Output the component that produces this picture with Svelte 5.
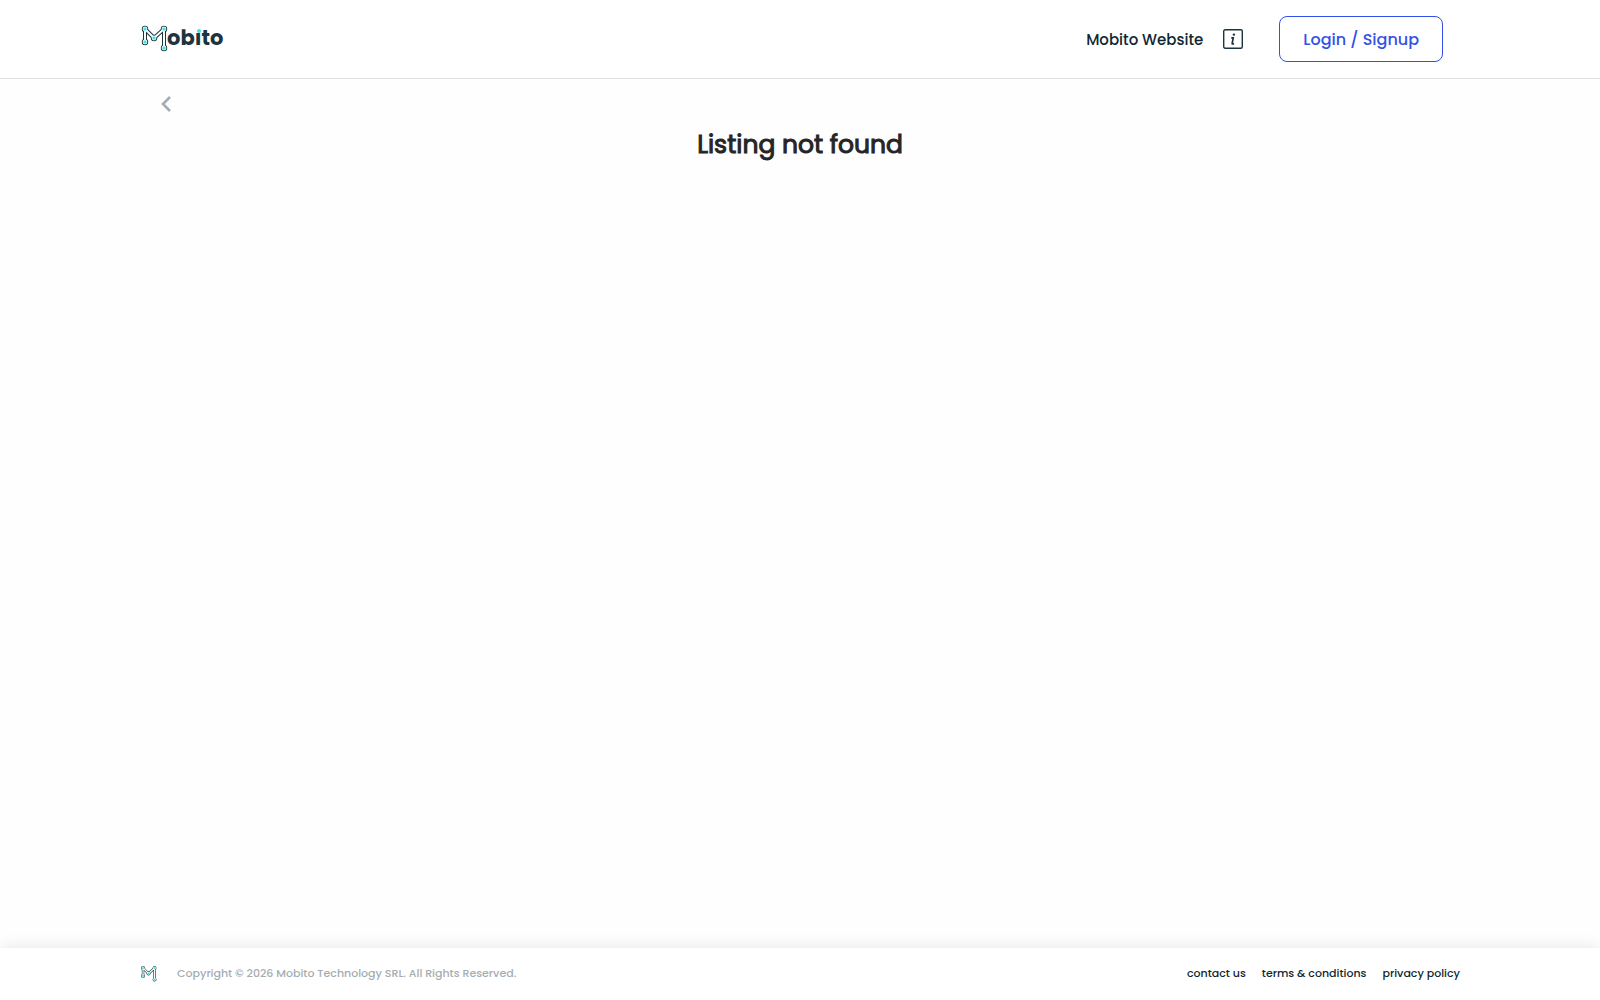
<script lang="ts">
  const nodes = [
    [5, 6],
    [5, 19],
    [14, 15],
    [24, 6],
    [24, 25],
  ];

  const footerLinks = ['contact us', 'terms & conditions', 'privacy policy'];
</script>

{#snippet mark()}
  <g fill="none" stroke-linejoin="round">
    <path d="M5 19V6L14 15L24 6V25" stroke="#1d333d" stroke-width="4" />
    {#each nodes as [cx, cy]}
      <circle {cx} {cy} r="3.2" fill="#1d333d" />
    {/each}
    <path d="M5 19V6L14 15L24 6V25" stroke="#fff" stroke-width="2" />
    {#each nodes as [cx, cy]}
      <circle {cx} {cy} r="2.4" fill="#d4f8f8" />
      <circle {cx} {cy} r="1.5" fill="#3fe3e3" />
    {/each}
  </g>
{/snippet}

<div class="page">
  <header class="header">
    <div class="container">
      <a class="logo" href="/" aria-label="Mobito">
        <svg width="92" height="32" viewBox="0 0 92 32">
          {@render mark()}
          <text class="logo-text" x="27" y="22">obıto</text>
          <circle cx="59" cy="8" r="2" fill="#3fe3e3" />
        </svg>
      </a>
      <nav class="nav">
        <a class="nav-link" href="/website">Mobito Website</a>
        <a class="info" href="/info" aria-label="Information">
          <svg width="20" height="20" viewBox="0 0 20 20" fill="none" stroke="#1d333d">
            <rect x="0.7" y="0.7" width="18.6" height="18.6" rx="1.5" stroke-width="1.4" />
            <circle cx="10.9" cy="5.6" r="1.2" fill="#1d333d" stroke="none" />
            <path d="M8.3 8.9H10.2L9.2 14.4Q9 15.5 11 14.6" stroke-width="1.7" />
          </svg>
        </a>
        <button class="login" type="button">Login / Signup</button>
      </nav>
    </div>
  </header>

  <main class="content">
    <button class="back" type="button" aria-label="Go back">
      <svg width="10" height="16" viewBox="0 0 10 16" fill="none" stroke="#a4adb1" stroke-width="2.6">
        <path d="M9 1L2 8L9 15" />
      </svg>
    </button>
    <h1>Listing not found</h1>
  </main>

  <footer class="footer">
    <div class="container">
      <svg class="footer-mark" width="17" height="17" viewBox="0 1 28 28">
        {@render mark()}
      </svg>
      <span class="copyright">Copyright © 2026 Mobito Technology SRL. All Rights Reserved.</span>
      <nav class="footer-links">
        {#each footerLinks as link}
          <a href="/{link.replaceAll(' ', '-')}">{link}</a>
        {/each}
      </nav>
    </div>
  </footer>
</div>

<style>
  :global(body) {
    background: #fefefe;
  }

  .page {
    display: flex;
    flex-direction: column;
    min-height: 100vh;
    font-family: Poppins, Inter, sans-serif;
    color: #0f2732;
  }

  .container,
  .content {
    box-sizing: border-box;
    width: 100%;
    max-width: 1320px;
    margin: 0 auto;
  }

  .container {
    display: flex;
    align-items: center;
  }

  a {
    color: inherit;
    text-decoration: none;
  }

  svg {
    display: block;
  }

  .header {
    padding: 16px 0;
    border-bottom: 1px solid #dfe1e2;
    background: #fff;
  }

  .logo-text {
    font-size: 21px;
    font-weight: 700;
    fill: #1d333d;
  }

  .nav {
    display: flex;
    align-items: center;
    margin-left: auto;
    padding-right: 17px;
  }

  .nav-link {
    font-size: 15px;
    font-weight: 500;
  }

  .info {
    margin: 0 36px 0 20px;
  }

  .login {
    height: 46px;
    padding: 0 23px;
    border: 1px solid #3350e8;
    border-radius: 8px;
    background: #fff;
    color: #3350e8;
    font: inherit;
    font-size: 16px;
    font-weight: 500;
    cursor: pointer;
  }

  .content {
    flex: 1;
    padding: 17px 21px 0;
  }

  .back {
    display: block;
    padding: 0;
    border: 0;
    background: none;
    cursor: pointer;
  }

  h1 {
    margin: 14px 0 0;
    font-size: 25px;
    font-weight: 400;
    line-height: 38px;
    text-align: center;
    color: #252525;
    -webkit-text-stroke: 1px #252525;
  }

  .footer {
    padding: 15px 0 17px;
    background: #fff;
    box-shadow: 0 0 16px rgba(0, 0, 0, 0.1);
    font-size: 11px;
    font-weight: 500;
    line-height: 20px;
  }

  .copyright {
    margin-left: 20px;
    color: #a4adb1;
  }

  .footer-links {
    display: flex;
    gap: 16px;
    margin-left: auto;
  }
</style>
